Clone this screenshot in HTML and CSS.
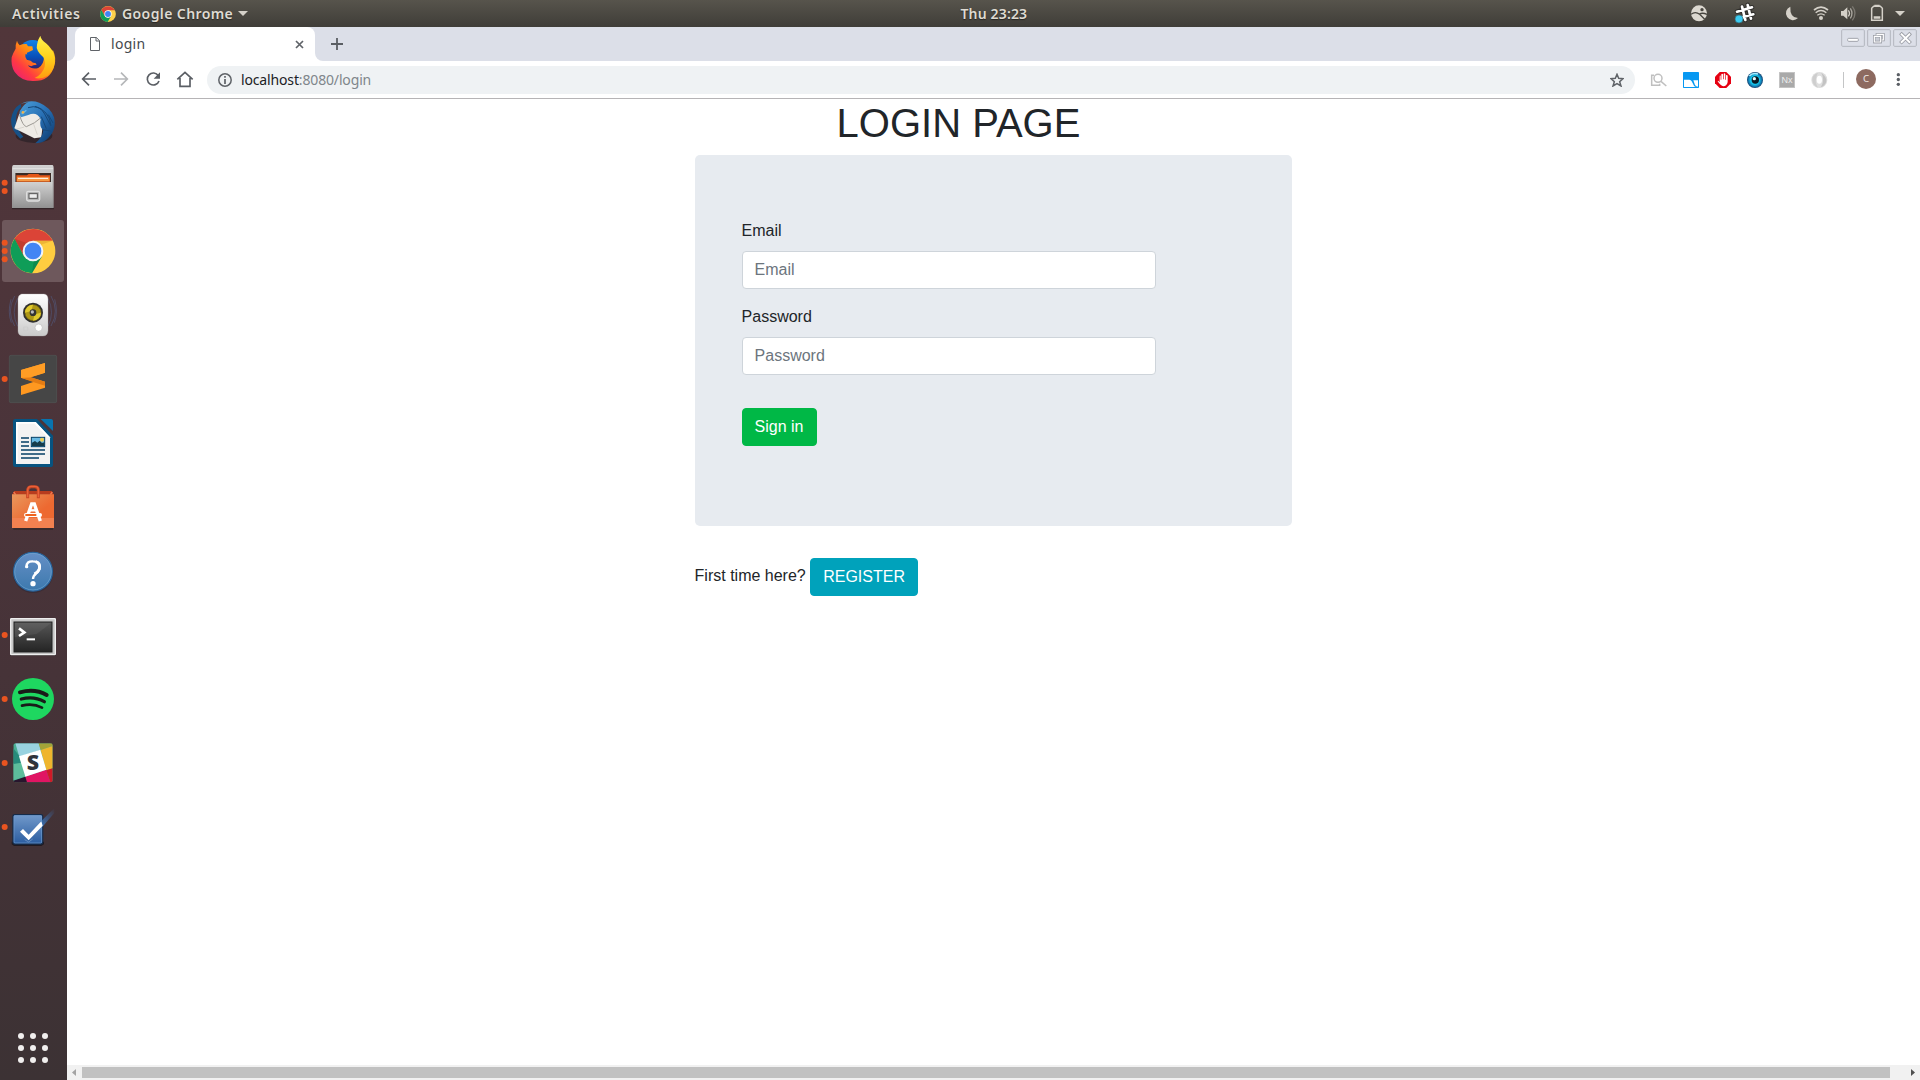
FILE: index.html
```html
<!DOCTYPE html>
<html lang="en">
<head>
<meta charset="utf-8">
<title>login</title>
<link rel="stylesheet" href="styles.css">
</head>
<body>
<div class="desktop">
  <header class="topbar">
    <div class="topbar-left">
      <span class="activities">Activities</span>
      <svg class="app-icon" width="16" height="16" viewBox="32 40 134 136"><circle cx="99" cy="108" r="67" fill="#fdd04a"/><path d="M42 74A67 67 0 0 1 157 77H99L72 124Z" fill="#db4437"/><path d="M42 74A67 67 0 0 0 96 175L126 124 99 139 72 124Z" fill="#0f9d58"/><circle cx="99" cy="108" r="31" fill="#fff"/><circle cx="99" cy="108" r="25" fill="#4285f4"/></svg>
      <span class="app-name">Google Chrome</span>
      <svg width="10" height="5" viewBox="0 0 10 5"><path d="M0 0H10L5 5Z" fill="#d5d1c9"/></svg>
    </div>
    <div class="clock">Thu 23:23</div>
    <div class="indicators">
      <svg width="40" height="27" viewBox="360 0 120 81"><circle cx="417" cy="40" r="24" fill="#dcd8d0"/><path d="M393 43Q406 33 419 43L434 58M418 42Q428 37 441 43" fill="none" stroke="#47453f" stroke-width="4"/><circle cx="426" cy="29" r="5" fill="#47453f"/></svg>
      <svg width="55" height="27" viewBox="480 0 165 81"><g fill="none" stroke-linecap="round"><path d="M546 20L556 60M563 15L573 56M531 35L576 22M536 55L580 43" stroke="#302f2c" stroke-width="14"/><path d="M546 20L556 60M563 15L573 56M531 35L576 22M536 55L580 43" stroke="#fff" stroke-width="8"/></g><circle cx="537" cy="57" r="12" fill="#3bcaf0" stroke="#356570" stroke-width="2"/></svg>
      <svg width="31" height="27" viewBox="645 0 93 81"><path d="M691 20A21 21 0 1 0 714 54Q689 53 691 20Z" fill="#d5d1c9"/></svg>
      <svg width="30" height="27" viewBox="738 0 90 81"><g fill="none" stroke="#d5d1c9" stroke-width="4"><path d="M762 30Q783 13 804 30" stroke-width="5"/><path d="M767 38Q783 25 799 38"/><path d="M772 46Q783 37 794 46"/></g><circle cx="783" cy="54" r="6" fill="#d5d1c9"/></svg>
      <svg width="30" height="27" viewBox="828 0 90 81"><path d="M843 33H850L862 22V58L850 47H843Z" fill="#d5d1c9"/><g fill="none"><path d="M865 31Q872 40 865 49" stroke="#d5d1c9" stroke-width="4"/><path d="M871 25Q881 40 871 55" stroke="#aaa79f" stroke-width="4"/><path d="M877 19Q893 40 877 61" stroke="#7b7871" stroke-width="4"/></g></svg>
      <svg width="22" height="27" viewBox="918 0 66 81"><path d="M935 25L941 19H961L967 25V61H935Z" fill="none" stroke="#d5d1c9" stroke-width="4.5"/><path d="M943 14H959V20H943ZM941 49H961V56H941Z" fill="#d5d1c9"/></svg>
      <svg width="32" height="27" viewBox="984 0 96 81"><path d="M1005 33H1035L1020 48Z" fill="#d5d1c9"/></svg>
    </div>
  </header>

  <div class="workspace">
    <nav class="dock">
      <svg class="launcher" viewBox="0 15 201 192">
        <defs>
          <linearGradient id="fox" x1="0" y1="1" x2="1" y2="0"><stop offset="0" stop-color="#e31587"/><stop offset=".3" stop-color="#ff3b41"/><stop offset=".55" stop-color="#ff8a12"/><stop offset="1" stop-color="#ffdc1e"/></linearGradient>
          <linearGradient id="foxtail" x1="0" y1="0" x2="0" y2="1"><stop offset="0" stop-color="#fff44f"/><stop offset=".5" stop-color="#ffd21c"/><stop offset="1" stop-color="#ff9b10"/></linearGradient>
          <linearGradient id="globe" x1="0" y1="0" x2="0" y2="1"><stop offset="0" stop-color="#1183e8"/><stop offset=".6" stop-color="#084fb8"/><stop offset="1" stop-color="#33206d"/></linearGradient>
        </defs>
        <circle cx="98" cy="97" r="43" fill="url(#globe)"/>
        <path d="M51 56Q53 65 59 70Q68 65 80 66L84 73H97L99 84 85 91Q78 92 82 97H76Q74 105 81 114Q92 113 99 122Q109 121 110 128Q98 129 94 133L83 130Q96 144 115 138Q132 127 132 104Q146 92 159 85Q170 109 163 131Q151 177 101 177Q64 178 44 150Q32 132 35 106Q40 91 47 80Q46 67 51 56Z" fill="url(#fox)"/>
        <path d="M121 41Q123 53 138 64Q160 82 164 108Q168 140 143 161Q123 173 104 168Q127 157 134 134Q137 118 130 106Q106 84 111 68Q113 53 121 41Z" fill="url(#foxtail)"/>
      </svg>
      <svg class="launcher" viewBox="0 207 201 192">
        <defs><linearGradient id="bird" x1="0" y1="0" x2="1" y2="1"><stop offset="0" stop-color="#4ba0dc"/><stop offset=".5" stop-color="#276eb3"/><stop offset="1" stop-color="#0b3566"/></linearGradient></defs>
        <ellipse cx="102" cy="341" rx="55" ry="22" fill="#282025" opacity=".7"/>
        <path d="M62 245Q37 260 33 292Q32 326 61 350L70 344Q48 320 48 290Q50 265 64 256Z" fill="#175187"/>
        <path d="M43 319L58 275 112 270 131 287 124 346 103 349Z" fill="#eeebe6"/>
        <path d="M59 280Q68 311 79 314Q103 306 127 284" fill="none" stroke="#9c9994" stroke-width="3"/>
        <path d="M73 315L47 322M101 307L112 338" stroke="#cbc7c0" stroke-width="2"/>
        <path d="M62 245Q92 232 118 242Q152 256 162 286Q172 327 138 354Q125 364 106 364Q127 348 130 325Q117 316 122 291Q109 267 85 279L63 286Q53 273 65 259Q73 245 86 240Z" fill="url(#bird)"/>
        <path d="M84 257Q119 246 134 276M105 253Q148 266 153 310M124 284L139 320M134 276L153 312M145 278L159 303M127 323L152 327" fill="none" stroke="#174879" stroke-width="3"/>
        <path d="M65 276L79 265" stroke="#6eb9e6" stroke-width="4"/><circle cx="69" cy="271" r="4" fill="#eeb34d"/>
      </svg>
      <svg class="launcher" viewBox="0 399 201 192">
        <defs><linearGradient id="steel" x1="0" y1="0" x2="0" y2="1"><stop offset="0" stop-color="#d2d2d2"/><stop offset="1" stop-color="#929292"/></linearGradient></defs>
        <g fill="#e95420"><circle cx="14" cy="482" r="9"/><circle cx="14" cy="507" r="9"/></g>
        <path d="M36 555H162V562H36Z" fill="#342528"/>
        <path d="M41 429H157Q161 429 161 440V558H36V440Q36 429 41 429Z" fill="url(#steel)"/>
        <path d="M38 440H159M46 486V454H153V486" fill="none" stroke="#efefef" stroke-width="2"/>
        <path d="M46 453H153V486H46Z" fill="#3c2b25"/>
        <path d="M49 460H81L86 456H115L120 460H150V479H49Z" fill="#e45718"/><path d="M51 466H148V478H51Z" fill="#f69a45"/><path d="M54 469H144" stroke="#fff" stroke-width="3"/>
        <path d="M41 480H157V557H41Z" fill="url(#steel)"/><rect x="80" y="508" width="39" height="29" rx="5" fill="#b4b4b4" stroke="#dedede" stroke-width="4"/><rect x="87" y="515" width="25" height="14" fill="#eee" stroke="#555" stroke-width="3"/>
      </svg>
      <svg class="launcher" viewBox="0 12 201 192">
        <rect x="6" y="15" width="186" height="186" rx="9" fill="#6e585c"/>
        <g fill="#e95420"><circle cx="14" cy="83" r="9"/><circle cx="14" cy="108" r="9"/><circle cx="14" cy="133" r="9"/></g>
        <circle cx="99" cy="108" r="67" fill="#ffcd40"/>
        <path d="M43 72A67 67 0 0 1 158 77H99L72 124Z" fill="#db4437"/>
        <path d="M44 71A67 67 0 0 0 96 175L126 124 99 139 72 124Z" fill="#0f9d58"/>
        <path d="M99 77H158L123 89Z" fill="#e2a531" opacity=".6"/><path d="M44 71L72 124 80 84Z" fill="#963126" opacity=".35"/><path d="M96 175L126 124 101 140Z" fill="#085f38" opacity=".3"/>
        <circle cx="99" cy="108" r="31" fill="#f1f3f7"/><circle cx="99" cy="108" r="25" fill="#4285f4"/>
      </svg>
      <svg class="launcher" viewBox="0 204 201 192">
        <defs><linearGradient id="speaker" x1="0" y1="0" x2="0" y2="1"><stop offset="0" stop-color="#fff"/><stop offset="1" stop-color="#cacaca"/></linearGradient></defs>
        <g fill="none" stroke="#52628d" stroke-width="3" opacity=".5"><path d="M53 250Q32 292 53 334M44 243Q18 288 44 333M33 253Q22 292 34 323M144 250Q165 292 144 334M153 243Q179 288 153 333M164 253Q175 292 163 323"/></g>
        <path d="M65 237H132Q144 238 144 252V347Q143 363 129 363H70Q54 363 54 348V252Q54 240 65 237Z" fill="url(#speaker)" stroke="#aaa" stroke-width="1"/>
        <circle cx="99" cy="293" r="30" fill="#303030"/><circle cx="99" cy="293" r="24" fill="#ad9716" stroke="#70620e" stroke-width="2"/><path d="M75 293A24 24 0 0 1 99 269L94 288ZM123 293A24 24 0 0 1 99 317L104 298Z" fill="#e0c92d"/><circle cx="99" cy="293" r="10" fill="#333"/><circle cx="97" cy="291" r="5" fill="#b9b9b9"/><circle cx="116" cy="338" r="11" fill="#fff" stroke="#bbb" stroke-width="2"/><path d="M71 336H83V347H71Z" fill="none" stroke="#ccc" stroke-width="2"/>
      </svg>
      <svg class="launcher" viewBox="0 396 201 192">
        <circle cx="14" cy="492" r="9" fill="#e95420"/><rect x="27" y="420" width="144" height="144" rx="5" fill="#464646"/><rect x="28" y="421" width="142" height="142" rx="5" fill="none" stroke="#515151" stroke-width="2"/>
        <path d="M63 465L135 444V473L92 487 135 500V518L63 540V513L102 500 63 488Z" fill="#ff9820"/><path d="M92 487L135 500V512L99 501 63 488Z" fill="#e47c13"/><path d="M63 465L135 444V473L91 487 63 488Z" fill="#ff9d25"/>
      </svg>
      <svg class="launcher" viewBox="0 3 201 192">
        <path d="M46 27H111L159 77V164Q159 171 151 171H46Q39 171 39 164V34Q39 27 46 27Z" fill="#075380"/><path d="M122 27H154Q159 28 159 33V63Z" fill="#0874af"/><path d="M48 36H107L150 82V162H48Z" fill="#f2f2f2"/><path d="M107 36L150 82H143L103 41H53V157H48V36Z" fill="#fff"/>
        <path d="M63 84H87M63 96H87M63 108H87M63 120H135M63 132H135M63 144H117" stroke="#053f65" stroke-width="5"/><rect x="94" y="82" width="40" height="28" fill="#69b9e2" stroke="#053f65" stroke-width="3"/><circle cx="126" cy="89" r="6" fill="#edcc51"/><path d="M96 108V98L105 93 112 98 119 92 126 99 133 97V108Z" fill="#173c4a"/>
      </svg>
      <svg class="launcher" viewBox="0 195 201 192">
        <defs><linearGradient id="bag" x1="0" y1="0" x2="1" y2="1"><stop offset="0" stop-color="#e9985d"/><stop offset=".6" stop-color="#ed6931"/></linearGradient></defs>
        <path d="M40 355H159V359H40Z" fill="#332729"/><path d="M43 243L36 254H162L155 243Z" fill="#b83c1e"/><path d="M41 246L47 254M157 246L151 254" stroke="#f27a51" stroke-width="4"/><path d="M36 253H162V354H36Z" fill="url(#bag)"/><path d="M36 324H162V354H36Z" fill="#f28150"/><path d="M83 265V240Q84 230 94 230H104Q115 230 115 240V265" fill="none" stroke="#c84725" stroke-width="9"/><path d="M83 262V240Q84 229 94 229H104Q115 229 115 240V262" fill="none" stroke="#eb6039" stroke-width="4"/>
        <path d="M77 333L95 282H103L121 333" fill="none" stroke="#fff" stroke-width="10"/><path d="M86 301H112" stroke="#fff" stroke-width="7"/><rect x="72" y="309" width="54" height="12" rx="6" fill="#fff"/><path d="M76 315H109" stroke="#ef641f" stroke-width="6"/>
      </svg>
      <svg class="launcher" viewBox="0 387 201 192">
        <defs><linearGradient id="help" x1="0" y1="0" x2="0" y2="1"><stop offset="0" stop-color="#658fc6"/><stop offset="1" stop-color="#3c79ad"/></linearGradient></defs>
        <circle cx="99" cy="489" r="60" fill="#342b36" opacity=".7"/><circle cx="99" cy="485" r="58" fill="url(#help)" stroke="#28639b" stroke-width="4"/><circle cx="99" cy="485" r="55" fill="none" stroke="#73a7d1" stroke-width="2"/><path d="M80 470Q79 453 99 454Q120 454 119 472Q119 482 108 491Q99 497 99 507" fill="none" stroke="#fff" stroke-width="7"/><path d="M107 455Q122 460 118 477Q114 487 103 492" fill="none" stroke="#fff" stroke-width="9"/><circle cx="80" cy="470" r="5" fill="#fff"/><circle cx="99" cy="521" r="8" fill="#fff"/>
      </svg>
      <svg class="launcher" viewBox="0 9 201 192">
        <defs><linearGradient id="term" x1="0" y1="0" x2="0" y2="1"><stop offset="0" stop-color="#575757"/><stop offset="1" stop-color="#242424"/></linearGradient></defs>
        <circle cx="14" cy="105" r="9" fill="#e95420"/><rect x="30" y="56" width="138" height="112" rx="3" fill="#322629"/><rect x="32" y="56" width="134" height="108" rx="2" fill="#c6c6c6" stroke="#eee" stroke-width="4"/><rect x="42" y="66" width="114" height="90" fill="url(#term)" stroke="#202020" stroke-width="3"/><path d="M44 68H154L110 102 44 112Z" fill="#fff" opacity=".06"/><path d="M57 85L73 97 57 108" fill="none" stroke="#fff" stroke-width="8"/><path d="M80 118H105" stroke="#fff" stroke-width="6"/>
      </svg>
      <svg class="launcher" viewBox="0 201 201 192">
        <circle cx="14" cy="297" r="9" fill="#e95420"/><circle cx="99" cy="297" r="63" fill="#1ed760"/><g fill="none" stroke="#191b19" stroke-linecap="round"><path d="M60 277Q105 265 140 285" stroke-width="12"/><path d="M64 297Q102 287 133 305" stroke-width="10"/><path d="M66 317Q99 309 126 323" stroke-width="8"/></g>
      </svg>
      <svg class="launcher" viewBox="0 393 201 192">
        <defs><clipPath id="slackTile"><rect x="40" y="430" width="118" height="117" rx="6"/></clipPath></defs>
        <circle cx="14" cy="489" r="9" fill="#e95420"/><g clip-path="url(#slackTile)"><rect x="40" y="430" width="118" height="117" fill="#48ae92"/><path d="M46 430H116L122 449 58 470Z" fill="#99d2df"/><path d="M116 430H158V438L122 450Z" fill="#a3a338"/><path d="M122 450L158 438V505L139 511Z" fill="#efb52d"/><path d="M75 530L139 509 151 547H80Z" fill="#e01563"/><path d="M139 511L158 505V547H151Z" fill="#d01a27"/><path d="M40 542L76 530 81 547H40Z" fill="#28152d"/><path d="M40 490L64 488 75 529 40 541Z" fill="#5dbd9b"/><path d="M40 445L58 468 64 488 40 492Z" fill="#268b7b"/><path d="M57 469L121 449 139 509 76 530Z" fill="#fff"/></g><text class="slack-letter" x="99" y="511" text-anchor="middle">S</text>
      </svg>
      <svg class="launcher" viewBox="0 15 201 192">
        <defs><linearGradient id="todo" x1="0" y1="0" x2="0" y2="1"><stop offset="0" stop-color="#729acb"/><stop offset="1" stop-color="#2a5c9f"/></linearGradient><linearGradient id="swoosh" x1="0" y1="1" x2="1" y2="0"><stop offset="0" stop-color="#3b73b7"/><stop offset="1" stop-color="#3b73b7" stop-opacity="0"/></linearGradient></defs>
        <circle cx="14" cy="111" r="9" fill="#e95420"/><path d="M35 155H132V163L124 168H42L35 163Z" fill="#221b20"/><rect x="39" y="74" width="89" height="88" rx="5" fill="url(#todo)" stroke="#152c4b" stroke-width="4"/><rect x="42" y="77" width="83" height="82" rx="3" fill="none" stroke="#719fd1" stroke-width="2"/><path d="M120 97L163 55V69L127 111Z" fill="url(#swoosh)"/><path d="M74 149L86 156 98 147" fill="none" stroke="#7b9fc8" stroke-width="2"/><path d="M60 125L69 117 86 134 124 94 128 107 86 151Z" fill="#fff"/>
      </svg>
      <svg class="launcher show-apps" viewBox="0 678 201 192"><g fill="#f1efee"><circle cx="63" cy="738" r="9"/><circle cx="99" cy="738" r="9"/><circle cx="135" cy="738" r="9"/><circle cx="63" cy="774" r="9"/><circle cx="99" cy="774" r="9"/><circle cx="135" cy="774" r="9"/><circle cx="63" cy="810" r="9"/><circle cx="99" cy="810" r="9"/><circle cx="135" cy="810" r="9"/></g></svg>
    </nav>

    <section class="browser">
      <div class="tabstrip">
        <div class="tab-edge tab-edge-left"></div>
        <div class="tab">
          <svg width="10" height="14" viewBox="270 111 30 42"><path d="M271.500 112.500H289L298.500 122V151.500H271.500ZM288 112V123H299" fill="none" stroke="#5f6368" stroke-width="3"/></svg>
          <span class="tab-title">login</span>
          <svg width="9" height="9" viewBox="0 0 9 9"><path d="M1 1L8 8M8 1L1 8" stroke="#5f6368" stroke-width="1.700"/></svg>
        </div>
        <div class="tab-edge tab-edge-right"></div>
        <svg class="new-tab" width="12" height="12" viewBox="0 0 12 12"><path d="M6 0V12M0 6H12" stroke="#5a5e63" stroke-width="1.800"/></svg>
        <div class="window-controls">
          <svg width="24" height="18" viewBox="843 87 72 54"><rect x="845" y="89" width="68" height="50" rx="3" fill="none" stroke="#b3b6be" stroke-width="3"/><rect x="863" y="115" width="32" height="9" rx="3" fill="#fff" stroke="#a0a3ab" stroke-width="3"/></svg>
          <svg width="24" height="18" viewBox="921 87 72 54"><rect x="923" y="89" width="68" height="50" rx="3" fill="none" stroke="#b3b6be" stroke-width="3"/><g fill="none"><path d="M951 103H970V120H951ZM943 109H962V126H943Z" stroke="#9a9da5" stroke-width="8"/><path d="M951 103H970V120H951Z" stroke="#fff" stroke-width="3.500"/><path d="M943 109H962V126H943Z" fill="#c9ccd4" stroke="#9a9da5" stroke-width="7"/><path d="M943 109H962V126H943Z" stroke="#fff" stroke-width="3.500"/></g></svg>
          <svg width="24" height="18" viewBox="999 87 72 54"><rect x="1001" y="89" width="68" height="50" rx="3" fill="none" stroke="#b3b6be" stroke-width="3"/><path d="M1025 103L1048 126M1048 103L1025 126" stroke="#9a9da5" stroke-width="11" stroke-linecap="square"/><path d="M1025 103L1048 126M1048 103L1025 126" stroke="#fff" stroke-width="6" stroke-linecap="square"/></svg>
        </div>
      </div>

      <div class="toolbar">
        <svg width="140" height="37" viewBox="201 183 420 111"><g fill="none" stroke="#5a5e64" stroke-width="5"><path d="M288 237H249M267 218L248 237 267 256"/><path d="M342 237H381M363 218L382 237 363 256" stroke="#b5b7b9"/><path d="M475 227A18 18 0 1 0 477 243"/><path d="M532 238L555 217 578 238M540 234V259H570V234"/></g><path d="M480 217V236H461Z" fill="#5a5e64"/></svg>
        <div class="omnibox">
          <svg width="14" height="14" viewBox="0 0 14 14"><circle cx="7" cy="7" r="6.200" fill="none" stroke="#5f6368" stroke-width="1.500"/><path d="M7 6V11M7 3V4.800" stroke="#5f6368" stroke-width="1.700"/></svg>
          <span class="url"><span class="url-host">localhost</span>:8080/login</span>
          <svg class="bookmark" width="14" height="14" viewBox="149 219 42 42"><path d="M170 223L175 235 188 236 178 245 182 258 170 251 158 258 162 245 152 236 165 235Z" fill="none" stroke="#5f6368" stroke-width="4.500"/></svg>
        </div>
        <div class="extensions">
          <svg width="32" height="37" viewBox="249 183 96 111"><g fill="none" stroke="#bfbfbf" stroke-width="4.500"><path d="M282 226H275V256H299V251"/><circle cx="294" cy="235" r="12"/><path d="M303 244L319 258"/></g></svg>
          <svg width="32" height="37" viewBox="345 183 96 111"><rect x="369" y="216" width="48" height="48" rx="2" fill="#0798f2"/><path d="M372 239H388Q393 239 395 244L402 257Q404 261 410 261H372ZM400 241H414V260Q408 260 405 255Z" fill="#fff"/></svg>
          <svg width="32" height="37" viewBox="441 183 96 111"><path d="M479 216H499L513 230V250L499 264H479L465 250V230Z" fill="#e60012"/><path d="M479 247V230Q479 226 482 227V239H484V223Q487 219 489 223V238H491V221Q494 218 496 222V239H498V226Q501 223 503 227V246Q501 258 490 259Q482 258 473 244Q474 239 479 247Z" fill="#fff"/></svg>
          <svg width="32" height="37" viewBox="537 183 96 111"><defs><radialGradient id="eye"><stop offset="0" stop-color="#0b89a8"/><stop offset=".55" stop-color="#14c7ed"/><stop offset=".8" stop-color="#137db4"/><stop offset="1" stop-color="#14406c"/></radialGradient></defs><circle cx="585" cy="240" r="24" fill="url(#eye)"/><circle cx="586" cy="240" r="11" fill="#081923"/><circle cx="583" cy="236" r="5" fill="#eafcff"/><path d="M568 228Q578 217 594 222" fill="none" stroke="#a9efff" stroke-width="5"/></svg>
          <svg width="32" height="37" viewBox="633 183 96 111"><rect x="658" y="217" width="46" height="46" fill="#a9a9a9" stroke="#c2c2c2" stroke-width="2"/><text class="nx-label" x="681" y="249" text-anchor="middle">Nx</text></svg>
          <svg width="32" height="37" viewBox="729 183 96 111"><circle cx="778" cy="240" r="24" fill="#dedede"/><path d="M774 218Q754 226 757 242Q760 257 774 263Q765 248 768 236Q770 226 774 218Z" fill="#cecece"/><path d="M784 218Q799 230 799 242Q798 255 782 262Q791 248 789 235Q788 226 784 218Z" fill="#c3c3c3"/><ellipse cx="778" cy="239" rx="8" ry="12" fill="#fff"/></svg>
          <svg width="51" height="37" viewBox="825 183 153 111"><path d="M850.500 216V264" stroke="#c4c5c6" stroke-width="3"/><circle cx="918" cy="237" r="30" fill="#8d6a60"/><text class="avatar-letter" x="918" y="247" text-anchor="middle">C</text></svg>
          <svg width="34" height="37" viewBox="978 183 102 111"><g fill="#5a5e64"><circle cx="1015" cy="224" r="5"/><circle cx="1015" cy="238.500" r="5"/><circle cx="1015" cy="253" r="5"/></g></svg>
        </div>
      </div>

      <main class="page">
        <div class="login">
          <h1 class="page-title">LOGIN PAGE</h1>
          <form class="jumbotron">
            <label class="field-label" for="email">Email</label>
            <input class="field" id="email" type="email" placeholder="Email">
            <label class="field-label" for="password">Password</label>
            <input class="field" id="password" type="password" placeholder="Password">
            <button class="btn btn-success" type="button">Sign in</button>
          </form>
          <div class="register-row">First time here? <a class="btn btn-info">REGISTER</a></div>
        </div>
      </main>

      <div class="scrollbar">
        <svg width="15" height="15" viewBox="0 0 15 15"><path d="M9 4V11L5 7.500Z" fill="#a3a3a3"/></svg>
        <div class="scroll-thumb"></div>
        <svg width="30" height="15" viewBox="0 0 30 15"><path d="M21 4V11L25 7.500Z" fill="#505050"/></svg>
      </div>
    </section>
  </div>
</div>
</body>
</html>
```
FILE: styles.css
```css
* { box-sizing: border-box; }
body { margin: 0; overflow: hidden; background: #fff; }
svg { display: block; flex: none; }

.desktop { width: 1920px; height: 1080px; display: flex; flex-direction: column; }

/* System bar */
.topbar {
  height: 27px; flex: none;
  display: grid; grid-template-columns: 1fr auto 1fr; align-items: center;
  background: linear-gradient(#57544c, #3f3d38);
  color: #dfdbd2; white-space: nowrap;
  font: 600 14px/27px "Noto Sans", sans-serif;
  text-shadow: 0 1px 1px #282723;
}
.topbar-left { display: flex; align-items: center; padding-left: 12px; }
.activities { width: 88px; letter-spacing: 0.6px; }
.app-icon { margin-right: 6px; }
.app-name { width: 116px; letter-spacing: 0.4px; }
.clock { width: 68px; margin-left: 69px; letter-spacing: 0.15px; }
.indicators { display: flex; justify-content: flex-end; }

.workspace { flex: 1; min-height: 0; display: flex; }

/* Launcher dock */
.dock {
  width: 67px; flex: none;
  display: flex; flex-direction: column;
  background: linear-gradient(#51363a, #4a343a 45%, #423236 78%, #3c3234);
}
.launcher { width: 67px; height: 64px; }
.show-apps { margin-top: auto; }
.slack-letter { font: 800 64px "Open Sans", sans-serif; fill: #30343b; }

/* Browser frame */
.browser { flex: 1; min-width: 0; display: flex; flex-direction: column; background: #fff; }
.tabstrip { height: 34px; flex: none; display: flex; background: #dcdfe8; }
.tab-edge { width: 8px; background: #fff; }
.tab-edge::before { content: ""; display: block; height: 34px; background: #dcdfe8; }
.tab-edge-left::before { border-bottom-right-radius: 8px; }
.tab-edge-right::before { border-bottom-left-radius: 8px; }
.tab {
  width: 240px; padding: 0 11px 0 15px; display: flex; align-items: center;
  background: #fff; border-radius: 8px 8px 0 0;
}
.tab-title { flex: 1; margin-left: 11px; font: 14px/34px "Noto Sans", sans-serif; letter-spacing: 0.3px; color: #45494d; }
.new-tab { margin: 11px 0 0 8px; }
.window-controls { display: flex; gap: 2px; margin: 2px 3px 0 auto; }

.toolbar { height: 38px; flex: none; display: flex; border-bottom: 1px solid #b6b4b6; }
.omnibox {
  flex: 1; height: 28px; margin: 5px 8px 0 0; padding: 0 11px;
  display: flex; align-items: center; border-radius: 14px; background: #eff2f4;
}
.url { margin-left: 9px; font: 14px/28px "Noto Sans", sans-serif; letter-spacing: -0.15px; color: #80868b; }
.url-host { color: #202124; }
.bookmark { margin-left: auto; }
.extensions { display: flex; }
.nx-label { font: 27px "Liberation Sans", sans-serif; fill: #eee; }
.avatar-letter { font: 29px "Noto Sans", sans-serif; fill: #efe9e7; }

/* Login page */
.page {
  flex: 1; min-height: 0; padding-left: 627.6px;
  font: 16px/24px "Liberation Sans", Arial, sans-serif; color: #212529;
}
.login { width: 597px; }
.page-title { margin: 0 0 8px; padding-left: 142px; font-size: 40px; font-weight: 500; line-height: 48px; }
.jumbotron { height: 371px; margin-bottom: 32px; padding: 64px 47px; background: #e7ebf0; border-radius: 5px; }
.field-label { display: block; margin-bottom: 8px; }
.field {
  display: block; width: 414px; height: 38px; margin: 0 0 16px; padding: 6px 12px;
  border: 1px solid #ced4da; border-radius: 4px; background: #fff;
  font: inherit; color: #495057;
}
.field::placeholder { color: #6c757d; opacity: 1; }
.btn {
  display: inline-block; padding: 6px 12px; border: 1px solid transparent; border-radius: 4px;
  font: inherit; color: #fff; vertical-align: middle;
}
.btn-success { margin-top: 17px; background: #00b846; border-color: #00b846; }
.btn-info { background: #00a2bb; border-color: #00a2bb; }

.scrollbar { height: 15px; flex: none; display: flex; align-items: center; background: #f1f1f1; }
.scroll-thumb { flex: 1; height: 11px; background: #c1c1c1; }
```
